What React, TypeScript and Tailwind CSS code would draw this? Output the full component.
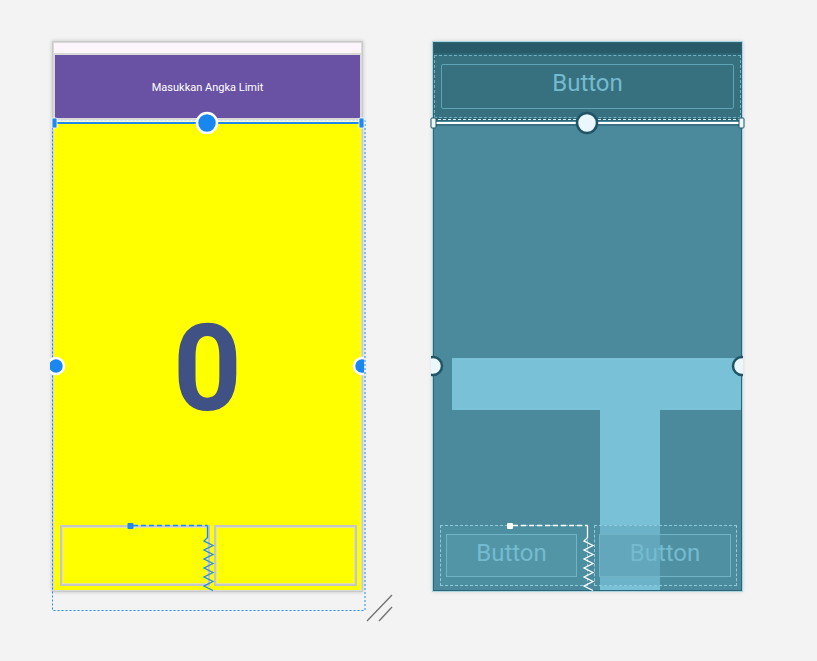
import React from 'react'

const font = { fontFamily: 'Roboto, "Liberation Sans", sans-serif' }

function Zigzag({ x, color }: { x: number; color: string }) {
  // spring drawn between the two bottom buttons
  const pts: string[] = []
  let y = 537
  let left = true
  while (y < 590) {
    pts.push(`${left ? x - 4 : x + 5},${y + 4}`)
    y += 4.5
    left = !left
  }
  return (
    <path
      d={`M${x},537 ${pts.map(p => 'L' + p).join(' ')}`}
      fill="none"
      stroke={color}
      strokeWidth={1.3}
    />
  )
}

function Overlays() {
  return (
    <svg className="absolute inset-0 pointer-events-none" width={817} height={661}>
      {/* ---------- left phone ---------- */}
      <rect x={52.5} y={120.5} width={312.5} height={490} fill="none" stroke="#1e88f2" strokeDasharray="2 2" />
      <line x1={55} y1={121} x2={361} y2={121} stroke="#ffffff" strokeWidth={1.5} />
      <line x1={55} y1={123} x2={361} y2={123} stroke="#1e88f2" strokeWidth={2} />
      <rect x={52} y={118} width={5} height={10} rx={1} fill="#1e88f2" stroke="#ffffff" strokeWidth={0.8} />
      <rect x={359} y={118} width={5} height={10} rx={1} fill="#1e88f2" stroke="#ffffff" strokeWidth={0.8} />
      <circle cx={207} cy={123} r={10} fill="#1a86f0" stroke="#ffffff" strokeWidth={2.5} />
      <clipPath id="lclip">
        <rect x={50} y={300} width={314} height={140} />
      </clipPath>
      <g clipPath="url(#lclip)">
        <circle cx={56} cy={366} r={8} fill="#1a86f0" stroke="#ffffff" strokeWidth={2.5} />
        <circle cx={362} cy={366} r={8} fill="#1a86f0" stroke="#ffffff" strokeWidth={2.5} />
      </g>
      <rect x={127.5} y={523} width={6} height={6} rx={1} fill="#1e88f2" />
      <path d="M133,525.5 L207.5,525.5" stroke="#1e88f2" strokeWidth={1.3} strokeDasharray="5 3" />
      <path d="M207.5,525.5 L207.5,537" stroke="#1e88f2" strokeWidth={1.3} />
      <Zigzag x={208} color="#1e88f2" />
      {/* resize grip */}
      <line x1={367} y1={621} x2={392} y2={595} stroke="#707070" strokeWidth={1.3} />
      <line x1={379} y1={621} x2={392} y2={607} stroke="#707070" strokeWidth={1.3} />

      {/* ---------- right phone ---------- */}
      <line x1={433} y1={119.5} x2={742} y2={119.5} stroke="#d5eef5" strokeWidth={1} strokeDasharray="3 2" />
      <line x1={435} y1={123} x2={741} y2={123} stroke="#ffffff" strokeWidth={2} />
      <line x1={435} y1={125} x2={741} y2={125} stroke="#24596a" strokeWidth={1} />
      <rect x={431} y={118} width={5} height={10} rx={1} fill="#eaf7fb" stroke="#1f5566" strokeWidth={1} />
      <rect x={739} y={118} width={5} height={10} rx={1} fill="#eaf7fb" stroke="#1f5566" strokeWidth={1} />
      <circle cx={587} cy={123} r={10} fill="#eaf7fb" stroke="#1f5566" strokeWidth={2.5} />
      <clipPath id="rclip">
        <rect x={431} y={300} width={312} height={140} />
      </clipPath>
      <g clipPath="url(#rclip)">
        <circle cx={433} cy={366} r={9} fill="#eaf7fb" stroke="#1f5566" strokeWidth={2.5} />
        <circle cx={742} cy={366} r={9} fill="#eaf7fb" stroke="#1f5566" strokeWidth={2.5} />
      </g>
      <rect x={507} y={523} width={6} height={6} rx={1} fill="#ffffff" />
      <path d="M513,525.5 L587.5,525.5" stroke="#ffffff" strokeWidth={1.3} strokeDasharray="5 3" />
      <path d="M587.5,525.5 L587.5,537" stroke="#ffffff" strokeWidth={1.3} />
      <Zigzag x={588} color="#ffffff" />
    </svg>
  )
}

export default function App() {
  return (
    <div className="relative w-[817px] h-[661px] bg-[#f3f3f3] overflow-hidden" style={font}>
      <div className="flex gap-[69px] pl-[52px] pt-[41px]">
        {/* Design view */}
        <div className="w-[311px] h-[551px] border border-[#c9c9c9] bg-[#d9d9d9] p-px flex flex-col shadow-[0_0_4px_rgba(0,0,0,0.2)]">
          <div className="h-[10px] bg-[#fcf5fc]" />
          <div className="mt-[2px] mx-[1px] h-[63px] bg-[#6951a3] flex items-center justify-center pt-[3px]">
            <span className="text-white text-[11px]">Masukkan Angka Limit</span>
          </div>
          <div className="h-[3px]" />
          <div className="flex-1 bg-[#ffff00] flex flex-col">
            <div className="flex-1 flex items-center justify-center pt-[92px]">
              <span className="text-[120px] font-bold leading-none text-[#3f5185]">0</span>
            </div>
            <div className="flex gap-[4px] pl-[6px] pr-[4px] pb-[4px] h-[65px]">
              <div className="w-[150px] border-2 border-[#c6c6c6] shadow-[inset_0_0_0_1px_#e4e4a0]" />
              <div className="flex-1 border-2 border-[#c6c6c6] shadow-[inset_0_0_0_1px_#e4e4a0]" />
            </div>
          </div>
        </div>

        {/* Blueprint view */}
        <div className="w-[311px] h-[551px] border border-[#a8d5e3] bg-[#2f6676] p-px flex flex-col shadow-[0_0_4px_rgba(0,0,0,0.12)]">
          <div className="h-[10px] bg-[#285a6a]" />
          <div className="mt-[2px] h-[63px] bg-[#37707f] border border-dashed border-[#6fb3c5] flex items-center px-[6px]">
            <div className="w-full h-[45px] border border-[#5fa4b6] rounded-[2px] flex items-center justify-center pb-[7px]">
              <span className="text-[24px] text-[#74bbcf]">Button</span>
            </div>
          </div>
          <div className="h-[3px]" />
          <div className="relative flex-1 bg-[#4a8a9c] flex flex-col">
            <div className="flex-1 flex flex-col justify-end">
              {/* T-shaped image preview */}
              <div className="ml-[18px] h-[52px] bg-[#79c1d7]" />
              <div className="ml-[166px] w-[60px] h-[180px] bg-[#79c1d7]" />
            </div>
            <div className="absolute left-0 right-0 bottom-0 flex gap-[6px] pl-[6px] pr-[4px] pb-[4px] h-[65px]">
              <div className="w-[148px] border border-dashed border-[#8fcadb] flex p-[8px] pl-[5px] pr-[10px] bg-[#4f92a4]/60">
                <div className="flex-1 border border-[#70b4c6] bg-[#5597a9]/70 flex items-center justify-center pb-[6px]">
                  <span className="text-[24px] text-[#74bbcf]">Button</span>
                </div>
              </div>
              <div className="flex-1 border border-dashed border-[#8fcadb] flex p-[8px] pl-[4px] pr-[5px] bg-[#4f92a4]/30">
                <div className="flex-1 border border-[#70b4c6] bg-[#5597a9]/40 flex items-center justify-center pb-[6px]">
                  <span className="text-[24px] text-[#74bbcf]">Button</span>
                </div>
              </div>
            </div>
          </div>
        </div>
      </div>
      <Overlays />
    </div>
  )
}
